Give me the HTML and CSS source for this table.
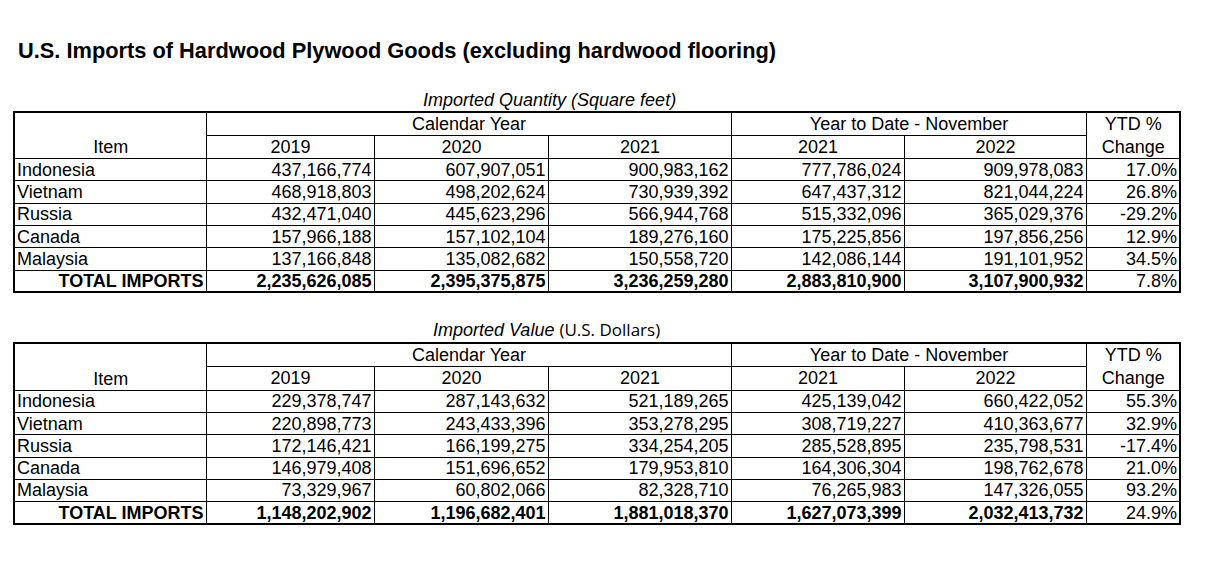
FILE: index.html
```html
<!DOCTYPE html>
<html>
<head>
<meta charset="utf-8">
<link rel="stylesheet" href="styles.css">
</head>
<body>
<div class="page">
  <h1 class="title">U.S. Imports of Hardwood Plywood Goods (excluding hardwood flooring)</h1>

  <div class="caption cap-qty"><i>Imported Quantity (Square feet)</i></div>
  <table class="data">
    <colgroup>
      <col class="c-item"><col class="c-2019"><col class="c-2020"><col class="c-2021"><col class="c-y21"><col class="c-y22"><col class="c-pct">
    </colgroup>
    <tr class="h">
      <th rowspan="2" class="item-h">Item</th>
      <th colspan="3">Calendar Year</th>
      <th colspan="2">Year to Date - November</th>
      <th rowspan="2" class="pct-h">YTD %<br>Change</th>
    </tr>
    <tr class="h">
      <th>2019</th><th>2020</th><th>2021</th><th>2021</th><th>2022</th>
    </tr>
    <tr><td class="name">Indonesia</td><td>437,166,774</td><td>607,907,051</td><td>900,983,162</td><td>777,786,024</td><td>909,978,083</td><td>17.0%</td></tr>
    <tr><td class="name">Vietnam</td><td>468,918,803</td><td>498,202,624</td><td>730,939,392</td><td>647,437,312</td><td>821,044,224</td><td>26.8%</td></tr>
    <tr><td class="name">Russia</td><td>432,471,040</td><td>445,623,296</td><td>566,944,768</td><td>515,332,096</td><td>365,029,376</td><td>-29.2%</td></tr>
    <tr><td class="name">Canada</td><td>157,966,188</td><td>157,102,104</td><td>189,276,160</td><td>175,225,856</td><td>197,856,256</td><td>12.9%</td></tr>
    <tr><td class="name">Malaysia</td><td>137,166,848</td><td>135,082,682</td><td>150,558,720</td><td>142,086,144</td><td>191,101,952</td><td>34.5%</td></tr>
    <tr class="total"><td>TOTAL IMPORTS</td><td>2,235,626,085</td><td>2,395,375,875</td><td>3,236,259,280</td><td>2,883,810,900</td><td>3,107,900,932</td><td class="plain">7.8%</td></tr>
  </table>

  <div class="caption cap-val"><i>Imported Value</i> <span class="alt">(U.S. Dollars)</span></div>
  <table class="data">
    <colgroup>
      <col class="c-item"><col class="c-2019"><col class="c-2020"><col class="c-2021"><col class="c-y21"><col class="c-y22"><col class="c-pct">
    </colgroup>
    <tr class="h">
      <th rowspan="2" class="item-h">Item</th>
      <th colspan="3">Calendar Year</th>
      <th colspan="2">Year to Date - November</th>
      <th rowspan="2" class="pct-h">YTD %<br>Change</th>
    </tr>
    <tr class="h">
      <th>2019</th><th>2020</th><th>2021</th><th>2021</th><th>2022</th>
    </tr>
    <tr><td class="name">Indonesia</td><td>229,378,747</td><td>287,143,632</td><td>521,189,265</td><td>425,139,042</td><td>660,422,052</td><td>55.3%</td></tr>
    <tr><td class="name">Vietnam</td><td>220,898,773</td><td>243,433,396</td><td>353,278,295</td><td>308,719,227</td><td>410,363,677</td><td>32.9%</td></tr>
    <tr><td class="name">Russia</td><td>172,146,421</td><td>166,199,275</td><td>334,254,205</td><td>285,528,895</td><td>235,798,531</td><td>-17.4%</td></tr>
    <tr><td class="name">Canada</td><td>146,979,408</td><td>151,696,652</td><td>179,953,810</td><td>164,306,304</td><td>198,762,678</td><td>21.0%</td></tr>
    <tr><td class="name">Malaysia</td><td>73,329,967</td><td>60,802,066</td><td>82,328,710</td><td>76,265,983</td><td>147,326,055</td><td>93.2%</td></tr>
    <tr class="total"><td>TOTAL IMPORTS</td><td>1,148,202,902</td><td>1,196,682,401</td><td>1,881,018,370</td><td>1,627,073,399</td><td>2,032,413,732</td><td class="plain">24.9%</td></tr>
  </table>
</div>
</body>
</html>
```

FILE: styles.css
```css
html, body {
  margin: 0;
  padding: 0;
  background: #fff;
  color: #000;
  font-family: "Liberation Sans", Arial, sans-serif;
}

.page {
  padding: 39px 0 0 13px;
}

.title {
  margin: 0 0 0 5px;
  font-size: 21.8px;
  line-height: 24px;
  font-weight: bold;
}

.caption {
  font-size: 18px;
  line-height: 20px;
  height: 20px;
}

.cap-qty {
  margin-top: 27px;
  padding-left: 410px;
  margin-bottom: 1px;
}

.cap-val {
  margin-top: 27px;
  padding-left: 420px;
  margin-bottom: 2px;
}

.caption .alt {
  font-family: "Open Sans", "Noto Sans", sans-serif;
  font-size: 17px;
}

.data {
  border-collapse: collapse;
  table-layout: fixed;
  width: 1166px;
  border: 2px solid #000;
  font-size: 18px;
}

.c-item { width: 192px; }
.c-2019 { width: 168px; }
.c-2020 { width: 174px; }
.c-2021 { width: 183px; }
.c-y21 { width: 173px; }
.c-y22 { width: 182px; }
.c-pct { width: 94px; }

.data th,
.data td {
  border: 1px solid #000;
  padding: 0 2px 0 3px;
  line-height: 20px;
  height: 22.3px;
  box-sizing: border-box;
  white-space: nowrap;
  overflow: hidden;
}

.data th {
  font-weight: normal;
  text-align: center;
  vertical-align: middle;
}

.data tr.h th {
  height: 22.6px;
}

.data th.item-h {
  vertical-align: bottom;
  padding-bottom: 1px;
}

.data th.pct-h {
  line-height: 22.6px;
}

.data td {
  text-align: right;
  vertical-align: middle;
}

.data td.name {
  text-align: left;
  padding-left: 2px;
}

.data tr.total td {
  font-weight: bold;
}

.data tr.total td.plain {
  font-weight: normal;
}
```
